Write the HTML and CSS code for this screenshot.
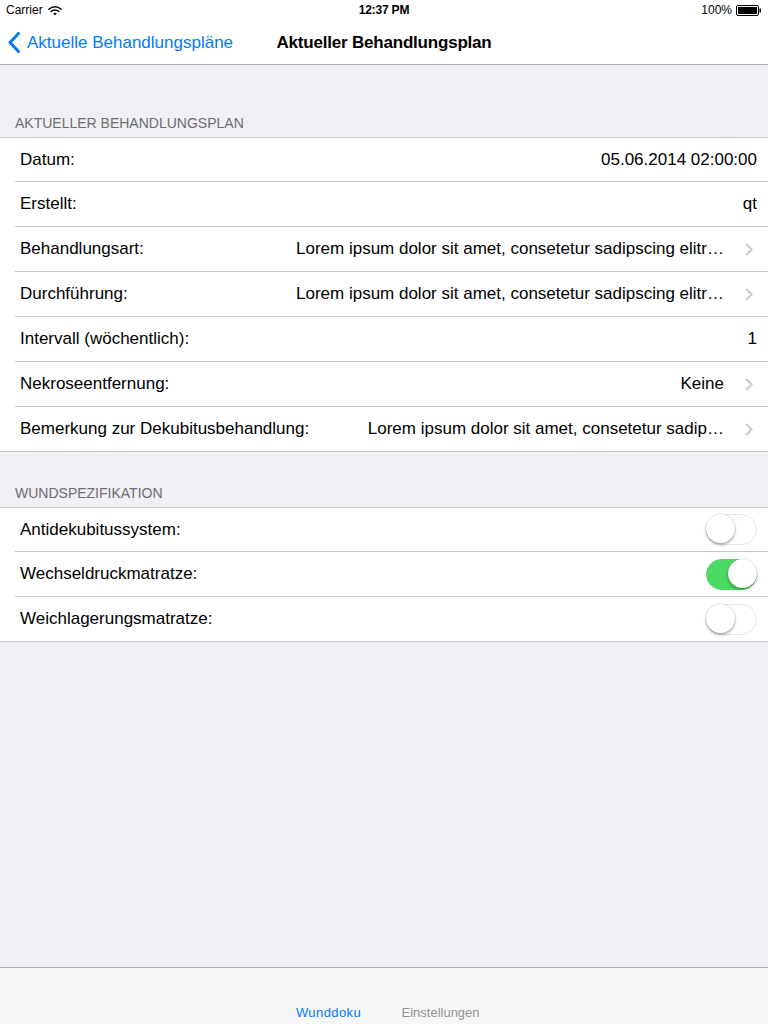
FILE: index.html
```html
<!DOCTYPE html>
<html lang="de">
<head>
<meta charset="utf-8">
<title>Aktueller Behandlungsplan</title>
<link rel="stylesheet" href="styles.css">
</head>
<body>
<div class="screen">
  <header class="status">
    <div class="status-left">
      <span>Carrier</span>
      <svg class="wifi" width="14" height="11" viewBox="0 0 14 11">
        <path d="M1 4.2 A8.5 8.5 0 0 1 13 4.2" fill="none" stroke="#000" stroke-width="1.6" stroke-linecap="round"/>
        <path d="M3.2 6.5 A5.4 5.4 0 0 1 10.8 6.5" fill="none" stroke="#000" stroke-width="1.6" stroke-linecap="round"/>
        <path d="M7 10.2 L5.2 8.5 A2.6 2.6 0 0 1 8.8 8.5 Z" fill="#000"/>
      </svg>
    </div>
    <div class="status-time">12:37 PM</div>
    <div class="status-right">
      <span>100%</span>
      <svg class="battery" width="26" height="11" viewBox="0 0 26 11">
        <rect x="0.5" y="0.5" width="22" height="10" rx="1.5" fill="none" stroke="#000"/>
        <rect x="2" y="2" width="19" height="7" fill="#000"/>
        <rect x="23.5" y="3.5" width="1.5" height="4" fill="#000"/>
      </svg>
    </div>
  </header>

  <nav class="navbar">
    <a class="back">
      <svg class="back-chevron" width="13" height="21" viewBox="0 0 13 21">
        <path d="M10.5 1.5 L2 10.5 L10.5 19.5" fill="none" stroke="#007aff" stroke-width="3" stroke-linecap="round" stroke-linejoin="round"/>
      </svg>
      <span>Aktuelle Behandlungspläne</span>
    </a>
    <h1 class="title">Aktueller Behandlungsplan</h1>
    <div></div>
  </nav>

  <main class="content">
    <h2 class="section-header first">AKTUELLER BEHANDLUNGSPLAN</h2>
    <ul class="table">
      <li class="row"><span class="label">Datum:</span><span class="value">05.06.2014 02:00:00</span></li>
      <li class="row"><span class="label">Erstellt:</span><span class="value">qt</span></li>
      <li class="row link"><span class="label">Behandlungsart:</span><span class="value">Lorem ipsum dolor sit amet, consetetur sadipscing elitr…</span><svg class="chev" width="8" height="13" viewBox="0 0 8 13"><path d="M1 1 L6.8 6.5 L1 12" fill="none" stroke="#c7c7cc" stroke-width="1.8"/></svg></li>
      <li class="row link"><span class="label">Durchführung:</span><span class="value">Lorem ipsum dolor sit amet, consetetur sadipscing elitr…</span><svg class="chev" width="8" height="13" viewBox="0 0 8 13"><path d="M1 1 L6.8 6.5 L1 12" fill="none" stroke="#c7c7cc" stroke-width="1.8"/></svg></li>
      <li class="row"><span class="label">Intervall (wöchentlich):</span><span class="value">1</span></li>
      <li class="row link"><span class="label">Nekroseentfernung:</span><span class="value">Keine</span><svg class="chev" width="8" height="13" viewBox="0 0 8 13"><path d="M1 1 L6.8 6.5 L1 12" fill="none" stroke="#c7c7cc" stroke-width="1.8"/></svg></li>
      <li class="row link"><span class="label">Bemerkung zur Dekubitusbehandlung:</span><span class="value">Lorem ipsum dolor sit amet, consetetur sadip…</span><svg class="chev" width="8" height="13" viewBox="0 0 8 13"><path d="M1 1 L6.8 6.5 L1 12" fill="none" stroke="#c7c7cc" stroke-width="1.8"/></svg></li>
    </ul>

    <h2 class="section-header">WUNDSPEZIFIKATION</h2>
    <ul class="table">
      <li class="row"><span class="label">Antidekubitussystem:</span><span class="switch"></span></li>
      <li class="row"><span class="label">Wechseldruckmatratze:</span><span class="switch on"></span></li>
      <li class="row"><span class="label">Weichlagerungsmatratze:</span><span class="switch"></span></li>
    </ul>
  </main>

  <footer class="tabbar">
    <span class="tab active">Wunddoku</span>
    <span class="tab">Einstellungen</span>
  </footer>
</div>
</body>
</html>
```
FILE: styles.css
```css
* { box-sizing: border-box; }
html, body { margin: 0; padding: 0; }
body {
  font-family: "Liberation Sans", Arial, sans-serif;
  background: #efeff4;
  color: #000;
}
.screen {
  width: 768px;
  height: 1024px;
  display: flex;
  flex-direction: column;
  overflow: hidden;
}
.status {
  height: 20px;
  background: #fff;
  display: grid;
  grid-template-columns: 1fr auto 1fr;
  align-items: center;
  font-size: 12px;
  padding: 0 6px;
}
.status-left { display: flex; align-items: center; gap: 5px; }
.status-time { font-weight: bold; letter-spacing: -0.2px; }
.status-right { display: flex; align-items: center; justify-content: flex-end; gap: 4px; }
.navbar {
  height: 45px;
  background: #fff;
  border-bottom: 1px solid #b2b2b2;
  display: grid;
  grid-template-columns: 1fr auto 1fr;
  align-items: center;
  padding-top: 1px;
}
.back {
  display: flex;
  align-items: center;
  color: #007aff;
  font-size: 17px;
  padding-left: 8px;
  gap: 6px;
}
.title {
  margin: 0;
  font-size: 17px;
  font-weight: bold;
  letter-spacing: -0.2px;
}
.content { flex: 1; }
.section-header {
  margin: 0;
  font-size: 14px;
  font-weight: normal;
  color: #6d6d72;
  line-height: 16px;
  padding: 33px 15px 6px;
}
.section-header.first { padding-top: 50px; }
.table {
  list-style: none;
  margin: 0;
  padding: 0 0 0 15px;
  background: #fff;
  border-top: 1px solid #c8c7cc;
  border-bottom: 1px solid #c8c7cc;
}
.row {
  height: 45px;
  display: flex;
  align-items: center;
  padding: 0 11px 0 5px;
  font-size: 17px;
  border-bottom: 1px solid #c8c7cc;
  white-space: nowrap;
}
.row:first-child { height: 44px; }
.row:last-child { border-bottom: none; height: 44px; }
.label { flex: none; }
.value {
  flex: 1;
  text-align: right;
  overflow: hidden;
  padding-left: 20px;
}
.row.link { padding-right: 15px; }
.chev {
  flex: none;
  margin-left: 21px;
}
.switch {
  margin-left: auto;
  flex: none;
  width: 51px;
  height: 31px;
  border-radius: 16px;
  border: 1.5px solid #e5e5ea;
  background: #fff;
  position: relative;
}
.switch::after {
  content: "";
  position: absolute;
  top: -1px;
  left: -1px;
  width: 29px;
  height: 29px;
  border-radius: 50%;
  background: #fff;
  box-shadow: 0 2px 3px rgba(0,0,0,0.3), 0 0 0 0.5px rgba(0,0,0,0.15);
}
.switch.on { background: #4cd964; border-color: #4cd964; }
.switch.on::after { left: auto; right: -1px; }
.tabbar {
  height: 57px;
  background: #f7f7f7;
  border-top: 1px solid #b2b2b2;
  display: flex;
  justify-content: center;
  gap: 35px;
  padding-top: 37px;
}
.tab {
  width: 76px;
  text-align: center;
  font-size: 13px;
  line-height: 16px;
  color: #929292;
}
.tab.active { color: #007aff; letter-spacing: 0.4px; }
```
